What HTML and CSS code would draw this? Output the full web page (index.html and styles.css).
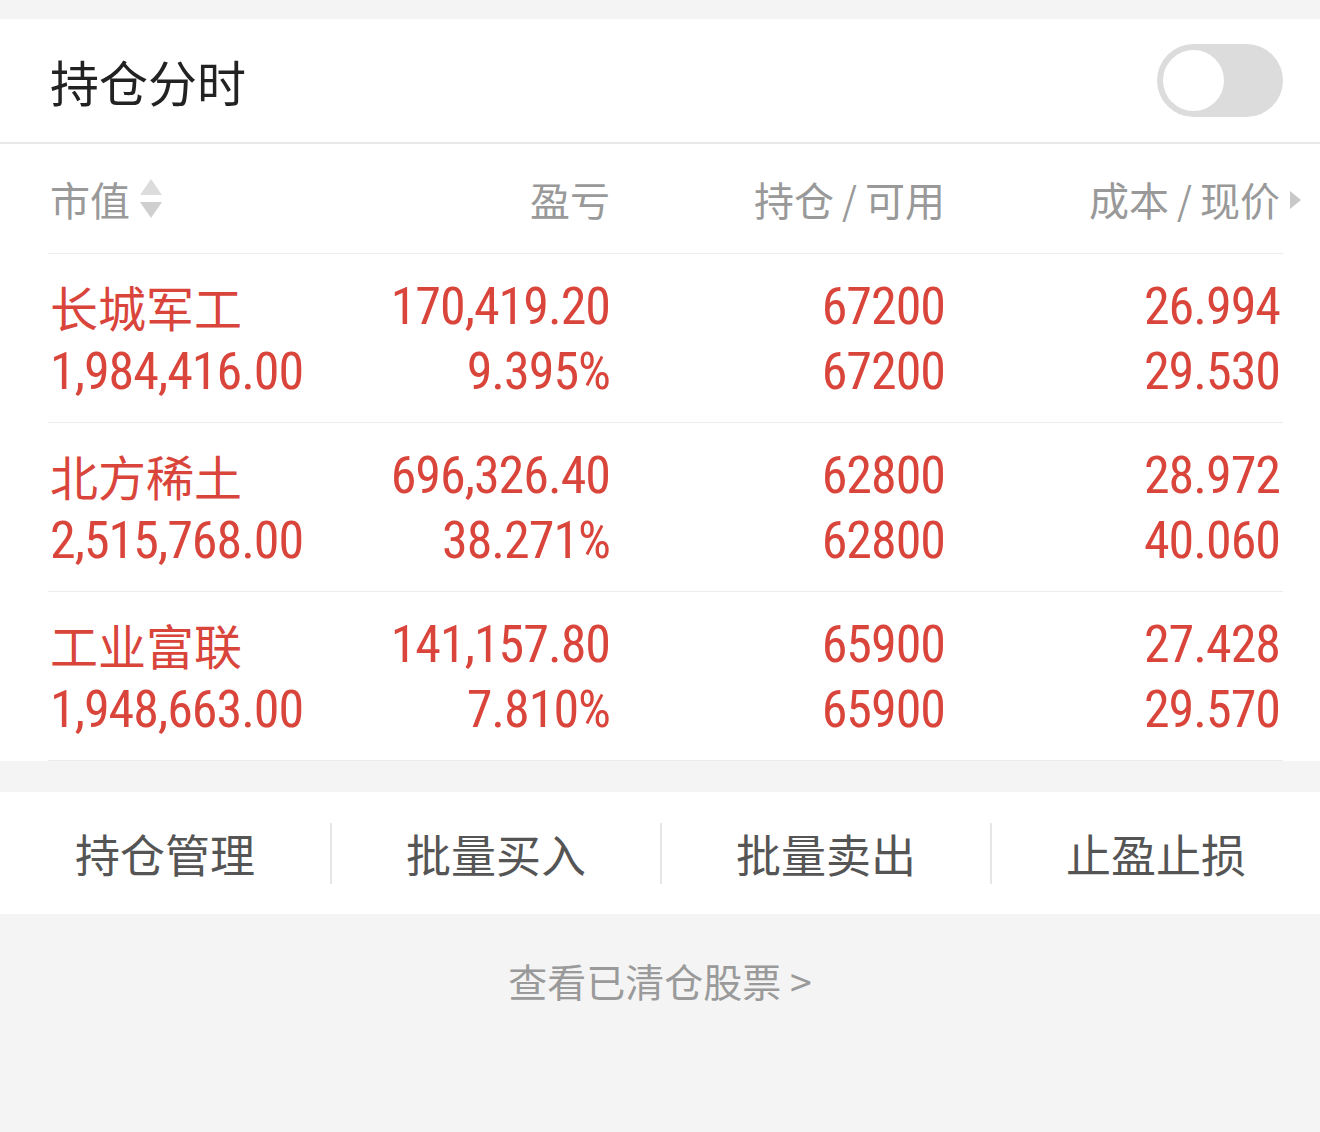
FILE: index.html
```html
<!DOCTYPE html>
<html lang="zh-CN">
<head>
    <meta name="viewport" content="width=device-width, initial-scale=1.0">
    <meta charset="UTF-8">
    <title>持仓分时</title>
    <link rel="stylesheet" href="styles.css">
</head>
<body>
    <section class="panel">
        <div class="title-bar">
            <h1>持仓分时</h1>
            <div class="switch"><span class="knob"></span></div>
        </div>

        <div class="table">
            <div class="row head">
                <div class="cell left">市值<span class="sort"><i class="up"></i><i class="down"></i></span></div>
                <div class="cell">盈亏</div>
                <div class="cell">持仓<span class="slash">/</span>可用</div>
                <div class="cell more">成本<span class="slash">/</span>现价<i class="arrow"></i></div>
            </div>

            <div class="row item">
                <div class="cell left"><span class="name">长城军工</span><span class="num">1,984,416.00</span></div>
                <div class="cell"><span class="num">170,419.20</span><span class="num">9.395%</span></div>
                <div class="cell"><span class="num">67200</span><span class="num">67200</span></div>
                <div class="cell"><span class="num">26.994</span><span class="num">29.530</span></div>
            </div>

            <div class="row item">
                <div class="cell left"><span class="name">北方稀土</span><span class="num">2,515,768.00</span></div>
                <div class="cell"><span class="num">696,326.40</span><span class="num">38.271%</span></div>
                <div class="cell"><span class="num">62800</span><span class="num">62800</span></div>
                <div class="cell"><span class="num">28.972</span><span class="num">40.060</span></div>
            </div>

            <div class="row item">
                <div class="cell left"><span class="name">工业富联</span><span class="num">1,948,663.00</span></div>
                <div class="cell"><span class="num">141,157.80</span><span class="num">7.810%</span></div>
                <div class="cell"><span class="num">65900</span><span class="num">65900</span></div>
                <div class="cell"><span class="num">27.428</span><span class="num">29.570</span></div>
            </div>
        </div>
    </section>

    <nav class="actions">
        <a class="action">持仓管理</a>
        <a class="action">批量买入</a>
        <a class="action">批量卖出</a>
        <a class="action">止盈止损</a>
    </nav>

    <div class="cleared">查看已清仓股票 &gt;</div>
</body>
</html>
```

FILE: styles.css
```css
body {
    margin: 0;
    padding: 19px 0 0;
    background: #f4f4f4;
    font-family: "Noto Sans CJK SC", "Noto Sans", sans-serif;
    color: #222;
}
.panel {
    background: #fff;
}
.title-bar {
    height: 123px;
    display: flex;
    align-items: center;
    justify-content: space-between;
    padding: 0 37px 0 50px;
    border-bottom: 2px solid #e8e8e8;
}
.title-bar h1 {
    margin: 0;
    font-size: 49px;
    font-weight: 400;
    color: #222;
}
.switch {
    width: 126px;
    height: 73px;
    border-radius: 37px;
    background: #dcdcdc;
    display: flex;
    align-items: center;
    padding-left: 6px;
    box-sizing: border-box;
}
.knob {
    width: 61px;
    height: 61px;
    border-radius: 50%;
    background: #fff;
}
.table {
    margin: 0 37px 0 48px;
}
.row {
    display: grid;
    grid-template-columns: 290px 272px 335px 335px;
    padding-right: 3px;
    border-bottom: 1px solid #ececec;
}
.cell {
    display: flex;
    flex-direction: column;
    align-items: flex-end;
    justify-content: center;
}
.cell.left {
    align-items: flex-start;
    padding-left: 2px;
}
.head {
    height: 109px;
}
.head .cell {
    flex-direction: row;
    align-items: center;
    justify-content: flex-end;
    font-size: 40px;
    color: #999;
}
.head .cell.left {
    justify-content: flex-start;
}
.slash {
    margin: 0 8px;
    font-size: 38px;
}
.sort {
    display: flex;
    flex-direction: column;
    gap: 7px;
    margin-left: 10px;
}
.sort i {
    width: 0;
    height: 0;
    border-left: 11px solid transparent;
    border-right: 11px solid transparent;
}
.sort .up {
    border-bottom: 16px solid #dcdcdc;
}
.sort .down {
    border-top: 16px solid #cfcfcf;
}
.more {
    position: relative;
}
.arrow {
    position: absolute;
    right: -21px;
    top: 47px;
    width: 0;
    height: 0;
    border-top: 9px solid transparent;
    border-bottom: 9px solid transparent;
    border-left: 11px solid #c8c8c8;
}
.item {
    height: 169px;
    padding-top: 20px;
    padding-bottom: 18px;
    box-sizing: border-box;
}
.item .cell {
    justify-content: flex-start;
}
.name {
    font-size: 48px;
    line-height: 65px;
    color: #d9443b;
}
.num {
    font-family: "Liberation Sans Narrow", "Roboto Condensed", "DejaVu Sans Condensed", Roboto, sans-serif;
    font-size: 52px;
    letter-spacing: -1px;
    line-height: 65px;
    color: #d9443b;
}
.actions {
    margin-top: 31px;
    height: 122px;
    background: #fff;
    display: grid;
    grid-template-columns: repeat(4, 1fr);
    align-items: center;
}
.action {
    text-align: center;
    font-size: 45px;
    line-height: 61px;
    color: #555;
    border-left: 2px solid #e6e6e6;
}
.action:first-child {
    border-left: none;
}
.cleared {
    padding-top: 38px;
    text-align: center;
    font-size: 39px;
    color: #9a9a9a;
}
```
